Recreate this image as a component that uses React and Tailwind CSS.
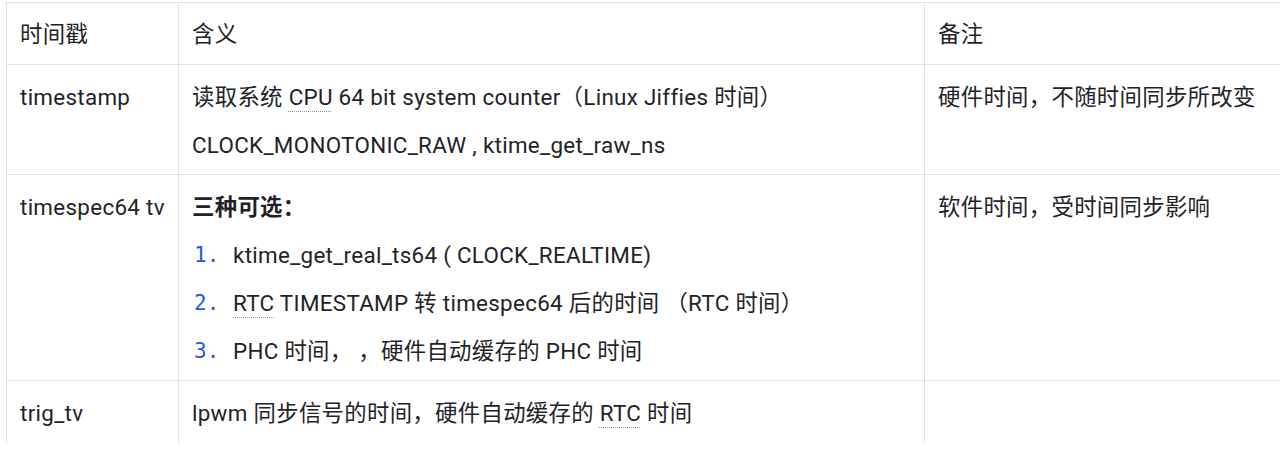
import React from 'react';

const Dotted = ({ children }) => (
  <span className="underline decoration-dotted decoration-[#8f959e] decoration-1 underline-offset-[6px]">
    {children}
  </span>
);

const Line = ({ children, bold }) => (
  <div className={`h-[48px] leading-[48px] whitespace-nowrap ${bold ? 'font-bold' : ''}`}>{children}</div>
);

const Num = ({ n, children }) => (
  <div className="h-[48px] leading-[48px] whitespace-nowrap flex">
    <span className="w-[41px] pl-[2px] text-[#245bdb] text-[21px] tracking-normal font-['DejaVu_Sans_Mono',monospace]">{n}.</span>
    <span>{children}</span>
  </div>
);

const head = 'border border-[#dee0e3] px-[13px] pt-[7px] pb-[6px] align-top text-left font-normal';
const cell = 'border border-[#dee0e3] px-[13px] pt-[8px] pb-[5px] align-top text-left font-normal';
const lastCell = 'border border-[#dee0e3] px-[13px] pt-[8px] pb-[40px] align-top text-left font-normal';

export default function App() {
  return (
    <div className="bg-white w-[1282px] h-[458px] pl-[6px] pt-[2px] font-['Roboto','Noto_Sans_CJK_SC',sans-serif] text-[22.4px] tracking-[0.3px] text-[#1f2329]">
      <div className="w-[1274px] h-[441px] overflow-hidden">
        <table className="w-[1274px] border-collapse table-fixed">
          <colgroup>
            <col className="w-[172px]" />
            <col className="w-[746px]" />
            <col className="w-[356px]" />
          </colgroup>
          <thead>
            <tr>
              <th className={head}>
                <Line>时间戳</Line>
              </th>
              <th className={head}>
                <Line>含义</Line>
              </th>
              <th className={head}>
                <Line>备注</Line>
              </th>
            </tr>
          </thead>
          <tbody>
            <tr>
              <td className={cell}>
                <Line>timestamp</Line>
              </td>
              <td className={cell}>
                <Line>
                  读取系统 <Dotted>CPU</Dotted> 64 bit system counter（Linux Jiffies 时间）
                </Line>
                <Line>CLOCK_MONOTONIC_RAW , ktime_get_raw_ns</Line>
              </td>
              <td className={cell}>
                <Line>硬件时间，不随时间同步所改变</Line>
              </td>
            </tr>
            <tr>
              <td className={cell}>
                <Line>timespec64 tv</Line>
              </td>
              <td className={cell}>
                <Line bold>三种可选：</Line>
                <Num n="1">ktime_get_real_ts64 ( CLOCK_REALTIME)</Num>
                <Num n="2">
                  <Dotted>RTC</Dotted> TIMESTAMP 转 timespec64 后的时间 （RTC 时间）
                </Num>
                <Num n="3">PHC 时间， ，硬件自动缓存的 PHC 时间</Num>
              </td>
              <td className={cell}>
                <Line>软件时间，受时间同步影响</Line>
              </td>
            </tr>
            <tr>
              <td className={lastCell}>
                <Line>trig_tv</Line>
              </td>
              <td className={lastCell}>
                <Line>
                  lpwm 同步信号的时间，硬件自动缓存的 <Dotted>RTC</Dotted> 时间
                </Line>
              </td>
              <td className={lastCell}>
                <Line> </Line>
              </td>
            </tr>
          </tbody>
        </table>
      </div>
    </div>
  );
}
